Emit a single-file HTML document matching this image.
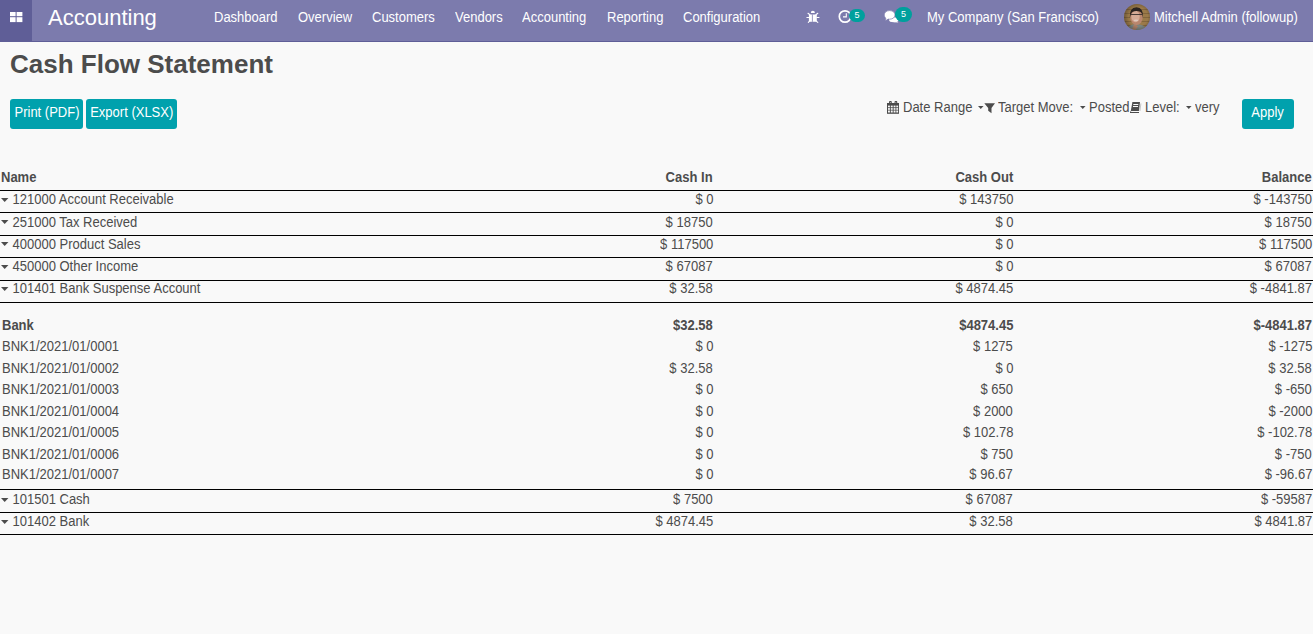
<!DOCTYPE html>
<html><head><meta charset="utf-8">
<style>
*{box-sizing:border-box;margin:0;padding:0}
html,body{width:1313px;height:634px;overflow:hidden;background:#f9f9f9;font-family:"Liberation Sans",sans-serif;font-size:13px;color:#4c4c4c}
.a{position:absolute;white-space:nowrap;line-height:15px;font-size:14px;transform:scaleX(.92857);transform-origin:0 0}
#nav{position:absolute;left:0;top:0;width:1313px;height:42px;background:#7c7bad;border-bottom:1px solid #5f5e97}
#tog{position:absolute;left:0;top:0;width:32px;height:41px;background:#5f5e97}
.sq{position:absolute;width:5px;height:5px;background:#fff}
.nv{color:#fff}
.badge{position:absolute;background:#00a09d;color:#fff;border-radius:8px;font-size:9px;line-height:13px;text-align:center}
.btn{position:absolute;background:#00a1ad;color:#fff;border-radius:3px;height:30px;line-height:15px;padding-top:6px;text-align:center}
.b{font-weight:bold}
.r{text-align:right}
.ln{position:absolute;left:0;width:1313px;height:1px;background:#000}
.car{display:inline-block;width:0;height:0;border-left:4.5px solid transparent;border-right:4.5px solid transparent;border-top:4.8px solid #4c4c4c;vertical-align:2.3px;margin-right:0.5px}
.car2{display:inline-block;width:0;height:0;border-left:3px solid transparent;border-right:3px solid transparent;border-top:3px solid #4c4c4c;vertical-align:3px}
.c1{right:600px}.c2{right:300px}.c3{right:1px}
.c1,.c2,.c3{transform-origin:100% 0}
.t{display:inline-block;font-size:14px;transform:scaleX(.92857)}
</style></head><body>
<div id="nav">
  <div id="tog">
    <svg style="position:absolute;left:10px;top:12px" width="13" height="11" viewBox="0 0 13 11"><g fill="#fff"><rect x="0" y="0" width="5.6" height="4.2"/><rect x="6.6" y="0" width="5.8" height="4.2"/><rect x="0" y="5.2" width="5.6" height="4.9"/><rect x="6.6" y="5.2" width="5.8" height="4.9"/></g></svg>
  </div>
  <div class="a nv" style="left:48px;top:5px;font-size:22px;line-height:25px;transform:none">Accounting</div>
  <div class="a nv" style="left:214px;top:10px">Dashboard</div>
  <div class="a nv" style="left:297.6px;top:10px">Overview</div>
  <div class="a nv" style="left:371.8px;top:10px">Customers</div>
  <div class="a nv" style="left:454.66px;top:10px">Vendors</div>
  <div class="a nv" style="left:522.36px;top:10px">Accounting</div>
  <div class="a nv" style="left:606.69px;top:10px">Reporting</div>
  <div class="a nv" style="left:683.07px;top:10px">Configuration</div>
  <!-- bug -->
  <svg style="position:absolute;left:806px;top:10px" width="14" height="14" viewBox="0 0 14 14"><g fill="#fff"><path d="M4.8 3.1 A2.05 2.4 0 0 1 8.9 3.1 Z"/><rect x="2.9" y="4.4" width="7.9" height="7.4" rx="1.2"/></g><g stroke="#fff" stroke-width="1.1" stroke-linecap="round"><path d="M2 3.3 L3.9 4.8 M11.8 3.3 L9.9 4.8 M0.9 7.5 H2.9 M10.8 7.5 H13 M2.3 12.4 L3.9 10.8 M11.8 12.4 L9.9 10.8"/></g><rect x="5.9" y="4.4" width="0.9" height="7.4" fill="#7c7bad" opacity="0.85"/></svg>
  <!-- clock -->
  <svg style="position:absolute;left:838px;top:9px" width="15" height="15" viewBox="0 0 15 15"><circle cx="7" cy="7.5" r="5.7" fill="none" stroke="#fff" stroke-width="1.7"/><path d="M8.3 4.3 V7.9 H5" fill="none" stroke="#fff" stroke-width="1.1"/></svg>
  <div class="badge" style="left:849px;top:9px;width:16px;height:13px">5</div>
  <!-- chat -->
  <svg style="position:absolute;left:884px;top:10px" width="16" height="14" viewBox="0 0 16 14"><g fill="#fff"><ellipse cx="9.8" cy="9.8" rx="4.8" ry="2.5"/><path d="M12 11 L14.6 12.6 L10 12.2 Z"/></g><g fill="#fff" stroke="#7c7bad" stroke-width="0.7"><path d="M5.6 0.6 C9 0.6 11 2.6 11 4.9 C11 7.2 9 9.2 5.6 9.2 C5 9.2 4.6 9.1 4.2 9.1 L1.2 10.8 L1.8 8.1 C0.8 7.3 0.3 6.2 0.3 4.9 C0.3 2.6 2.3 0.6 5.6 0.6 Z"/></g></svg>
  <div class="badge" style="left:895px;top:7px;width:17px;height:15px;line-height:14px;border-radius:8px">5</div>
  <div class="a nv" style="left:927px;top:10px">My Company (San Francisco)</div>
  <svg style="position:absolute;left:1124px;top:4px" width="26" height="26" viewBox="0 0 26 26"><defs><clipPath id="cc"><circle cx="13" cy="13" r="13"/></clipPath><radialGradient id="vg" cx="0.55" cy="0.5" r="0.6"><stop offset="0.6" stop-color="#000" stop-opacity="0"/><stop offset="1" stop-color="#000" stop-opacity="0.35"/></radialGradient></defs><g clip-path="url(#cc)"><rect width="26" height="26" fill="#9c7b4a"/><g fill="#6e5533" opacity="0.55"><rect y="5" width="26" height="1"/><rect y="9" width="26" height="1"/><rect y="13" width="26" height="1"/><rect y="17" width="26" height="1"/><rect y="21" width="26" height="1"/></g><path d="M2 26 Q5 20 12 20 Q20 20 24 26 Z" fill="#7a8480"/><path d="M8 26 Q9 21 11 20 L14 22.5 L11.5 26Z" fill="#a87c64"/><ellipse cx="12.5" cy="13" rx="6.3" ry="8" fill="#b9866e"/><ellipse cx="11.5" cy="12.5" rx="4.2" ry="5.8" fill="#d6ab96"/><path d="M5.8 14 Q5 3.5 12.5 3.2 Q19.8 3.5 19 14 L18 10 Q17 7 12.5 7 Q8 7 7 10Z" fill="#2a2320"/><path d="M6.8 10.5 H18.2" stroke="#3a302c" stroke-width="0.9"/><ellipse cx="12" cy="16.3" rx="2.3" ry="0.9" fill="#e0c8bc"/><rect width="26" height="26" fill="url(#vg)"/></g></svg>
  <div class="a nv" style="left:1154px;top:10px">Mitchell Admin (followup)</div>
</div>

<div class="a b" style="left:10px;top:49px;font-size:26px;line-height:30px;transform:none">Cash Flow Statement</div>
<div class="btn" style="left:10px;top:99px;width:73px"><span class="t">Print (PDF)</span></div>
<div class="btn" style="left:86px;top:99px;width:91px"><span class="t">Export (XLSX)</span></div>

<!-- filters -->
<svg style="position:absolute;left:887px;top:101px" width="12" height="13" viewBox="0 0 12 13"><rect x="0" y="2" width="12" height="10.8" fill="#4c4c4c"/><g fill="#f9f9f9"><rect x="1" y="4.6" width="1.9" height="1.7"/><rect x="3.8" y="4.6" width="1.9" height="1.7"/><rect x="6.6" y="4.6" width="1.9" height="1.7"/><rect x="9.3" y="4.6" width="1.8" height="1.7"/><rect x="1" y="7.1" width="1.9" height="1.7"/><rect x="3.8" y="7.1" width="1.9" height="1.7"/><rect x="6.6" y="7.1" width="1.9" height="1.7"/><rect x="9.3" y="7.1" width="1.8" height="1.7"/><rect x="1" y="9.5" width="1.9" height="2"/><rect x="3.8" y="9.5" width="1.9" height="2"/><rect x="6.6" y="9.5" width="1.9" height="2"/><rect x="9.3" y="9.5" width="1.8" height="2"/></g><g fill="none" stroke="#4c4c4c" stroke-width="1.1"><rect x="2.6" y="0.5" width="1.6" height="2.6" rx="0.6"/><rect x="8.1" y="0.5" width="1.6" height="2.6" rx="0.6"/></g></svg>
<div class="a" style="left:903px;top:100px">Date Range</div>
<div class="a" style="left:978px;top:100px"><span class="car2"></span></div>
<svg style="position:absolute;left:984px;top:102.5px" width="12" height="11" viewBox="0 0 12 11"><path d="M0.3 0.2 H11 L7.5 5 V10.3 L4.2 7.8 V5 Z" fill="#4c4c4c"/></svg>
<div class="a" style="left:998px;top:100px">Target Move:</div>
<div class="a" style="left:1080px;top:100px"><span class="car2"></span></div>
<div class="a" style="left:1089px;top:100px">Posted</div>
<svg style="position:absolute;left:1129px;top:101px" width="13" height="13" viewBox="0 0 13 13"><path d="M3.4 1 H11 L9.9 10 H1.8 Z" fill="#4c4c4c"/><path d="M1 11 H10 V12 H1 Z" fill="#4c4c4c"/><path d="M1.8 10 L2.4 10 L1.6 11 L1 11 Z" fill="#4c4c4c"/><path d="M4.3 3.5 H9.3 M4 5.5 H9" stroke="#f9f9f9" stroke-width="1"/><path d="M11.9 2.5 L10.9 10" stroke="#4c4c4c" stroke-width="0.6" opacity="0.5"/></svg>
<div class="a" style="left:1145px;top:100px">Level:</div>
<div class="a" style="left:1186px;top:100px"><span class="car2"></span></div>
<div class="a" style="left:1195px;top:100px">very</div>
<div class="btn" style="left:1242px;top:99px;width:52px"><span class="t">Apply</span></div>

<!-- table -->
<div class="a b" style="left:1px;top:170px">Name</div>
<div class="a b c1" style="top:170px">Cash In</div>
<div class="a b c2" style="top:170px">Cash Out</div>
<div class="a b c3" style="top:170px">Balance</div>
<div class="ln" style="top:190px"></div>

<div class="a" style="left:1px;top:192px"><span class="car"></span> 121000 Account Receivable</div>
<div class="a c1" style="top:192px">$ 0</div><div class="a c2" style="top:192px">$ 143750</div><div class="a c3" style="top:192px">$ -143750</div>
<div class="ln" style="top:212px"></div>

<div class="a" style="left:1px;top:214.5px"><span class="car"></span> 251000 Tax Received</div>
<div class="a c1" style="top:214.5px">$ 18750</div><div class="a c2" style="top:214.5px">$ 0</div><div class="a c3" style="top:214.5px">$ 18750</div>
<div class="ln" style="top:235px"></div>

<div class="a" style="left:1px;top:236.5px"><span class="car"></span> 400000 Product Sales</div>
<div class="a c1" style="top:236.5px">$ 117500</div><div class="a c2" style="top:236.5px">$ 0</div><div class="a c3" style="top:236.5px">$ 117500</div>
<div class="ln" style="top:257px"></div>

<div class="a" style="left:1px;top:259px"><span class="car"></span> 450000 Other Income</div>
<div class="a c1" style="top:259px">$ 67087</div><div class="a c2" style="top:259px">$ 0</div><div class="a c3" style="top:259px">$ 67087</div>
<div class="ln" style="top:280px"></div>

<div class="a" style="left:1px;top:281px"><span class="car"></span> 101401 Bank Suspense Account</div>
<div class="a c1" style="top:281px">$ 32.58</div><div class="a c2" style="top:281px">$ 4874.45</div><div class="a c3" style="top:281px">$ -4841.87</div>
<div class="ln" style="top:302px"></div>

<div class="a b" style="left:2px;top:318px">Bank</div>
<div class="a b c1" style="top:318px">$32.58</div><div class="a b c2" style="top:318px">$4874.45</div><div class="a b c3" style="top:318px">$-4841.87</div>

<div class="a" style="left:2px;top:338.5px">BNK1/2021/01/0001</div>
<div class="a c1" style="top:338.5px">$ 0</div><div class="a c2" style="top:338.5px">$ 1275</div><div class="a c3" style="top:338.5px">$ -1275</div>
<div class="a" style="left:2px;top:360.5px">BNK1/2021/01/0002</div>
<div class="a c1" style="top:360.5px">$ 32.58</div><div class="a c2" style="top:360.5px">$ 0</div><div class="a c3" style="top:360.5px">$ 32.58</div>
<div class="a" style="left:2px;top:381.5px">BNK1/2021/01/0003</div>
<div class="a c1" style="top:381.5px">$ 0</div><div class="a c2" style="top:381.5px">$ 650</div><div class="a c3" style="top:381.5px">$ -650</div>
<div class="a" style="left:2px;top:403.5px">BNK1/2021/01/0004</div>
<div class="a c1" style="top:403.5px">$ 0</div><div class="a c2" style="top:403.5px">$ 2000</div><div class="a c3" style="top:403.5px">$ -2000</div>
<div class="a" style="left:2px;top:424.5px">BNK1/2021/01/0005</div>
<div class="a c1" style="top:424.5px">$ 0</div><div class="a c2" style="top:424.5px">$ 102.78</div><div class="a c3" style="top:424.5px">$ -102.78</div>
<div class="a" style="left:2px;top:446.5px">BNK1/2021/01/0006</div>
<div class="a c1" style="top:446.5px">$ 0</div><div class="a c2" style="top:446.5px">$ 750</div><div class="a c3" style="top:446.5px">$ -750</div>
<div class="a" style="left:2px;top:467px">BNK1/2021/01/0007</div>
<div class="a c1" style="top:467px">$ 0</div><div class="a c2" style="top:467px">$ 96.67</div><div class="a c3" style="top:467px">$ -96.67</div>
<div class="ln" style="top:489px"></div>

<div class="a" style="left:1px;top:492px"><span class="car"></span> 101501 Cash</div>
<div class="a c1" style="top:492px">$ 7500</div><div class="a c2" style="top:492px">$ 67087</div><div class="a c3" style="top:492px">$ -59587</div>
<div class="ln" style="top:512px"></div>

<div class="a" style="left:1px;top:514px"><span class="car"></span> 101402 Bank</div>
<div class="a c1" style="top:514px">$ 4874.45</div><div class="a c2" style="top:514px">$ 32.58</div><div class="a c3" style="top:514px">$ 4841.87</div>
<div class="ln" style="top:534px"></div>
</body></html>
